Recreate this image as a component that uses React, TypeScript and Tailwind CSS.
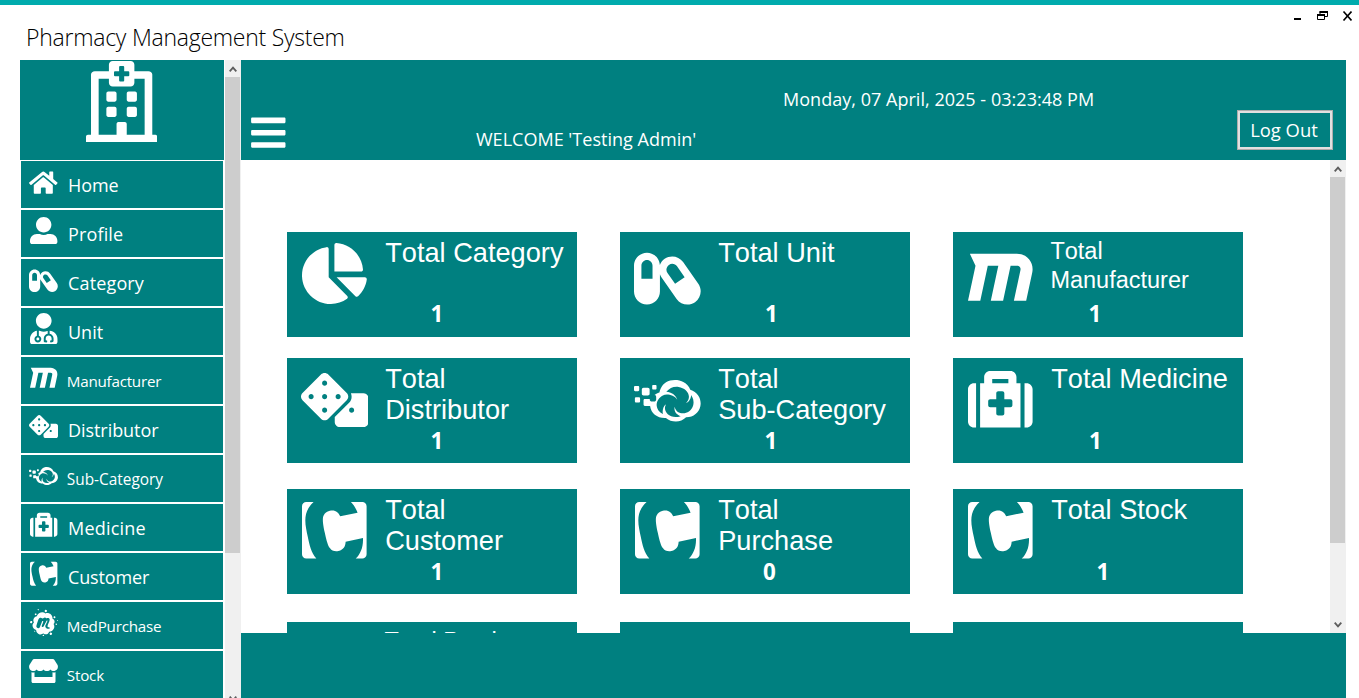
import type { IconType } from "react-icons";
import {
  FaBars,
  FaCapsules,
  FaChartPie,
  FaCloudversify,
  FaContao,
  FaDice,
  FaHome,
  FaMaxcdn,
  FaMedkit,
  FaMeetup,
  FaRegHospital,
  FaStore,
  FaUserAlt,
  FaUserMd,
} from "react-icons/fa";

type NavItem = { label: string; icon: IconType; iconClass: string; labelClass: string };

const navItems: NavItem[] = [
  { label: "Home", icon: FaHome, iconClass: "mt-[8.6px] mr-[1px] h-[25.4px] w-[28.6px]", labelClass: "text-[18px] tracking-[-0.1px]" },
  { label: "Profile", icon: FaUserAlt, iconClass: "mt-[7px] h-[27.4px] w-[27.4px]", labelClass: "text-[18px] tracking-[0.15px]" },
  { label: "Category", icon: FaCapsules, iconClass: "mt-[8.6px] mr-[1px] h-[25.6px] w-[28.8px]", labelClass: "text-[18px] tracking-[0.15px]" },
  { label: "Unit", icon: FaUserMd, iconClass: "mt-[5px] h-[31.4px] w-[27.5px]", labelClass: "text-[18px]" },
  { label: "Manufacturer", icon: FaMaxcdn, iconClass: "mt-[6.6px] h-[27.4px] w-[27.4px]", labelClass: "ml-[-1.2px] text-[15.2px] tracking-[-0.24px]" },
  { label: "Distributor", icon: FaDice, iconClass: "mt-[9px] mr-[1px] h-[23.3px] w-[29px]", labelClass: "text-[18px] tracking-[-0.06px]" },
  { label: "Sub-Category", icon: FaCloudversify, iconClass: "mt-[9px] mr-[1px] h-[24px] w-[29px]", labelClass: "ml-[-1.2px] mt-[1px] text-[15.4px]" },
  { label: "Medicine", icon: FaMedkit, iconClass: "mt-[7.4px] h-[27.4px] w-[27.4px]", labelClass: "text-[18px] tracking-[0.22px]" },
  { label: "Customer", icon: FaContao, iconClass: "mt-[6.6px] h-[27.4px] w-[27.4px]", labelClass: "text-[18px] tracking-[-0.15px]" },
  { label: "MedPurchase", icon: FaMeetup, iconClass: "mt-[6.7px] h-[27.4px] w-[27.4px]", labelClass: "ml-[-1.2px] text-[15.2px] tracking-[-0.22px]" },
  { label: "Stock", icon: FaStore, iconClass: "mt-[8.4px] mr-[1px] h-[24px] w-[29px]", labelClass: "ml-[-1.2px] text-[15.2px] tracking-[-0.2px]" },
];

type Card = {
  lines: string[];
  value?: string;
  icon?: IconType;
  iconClass?: string;
  compact?: boolean;
  valueClass?: string;
};

const rows: { className: string; cards: Card[] }[] = [
  {
    className: "mb-[21px]",
    cards: [
      { lines: ["Total Category"], value: "1", icon: FaChartPie, iconClass: "mt-[11px] mr-[0.8px] h-[61px] w-[64.8px]", valueClass: "pl-[143.5px]" },
      { lines: ["Total Unit"], value: "1", icon: FaCapsules, iconClass: "mt-[16.6px] h-[59.3px] w-[66.7px]", valueClass: "pl-[145px]" },
      {
        lines: ["Total", "Manufacturer"],
        value: "1",
        icon: FaMaxcdn,
        iconClass: "mt-[13.2px] h-[64.6px] w-[64.6px]",
        compact: true,
        valueClass: "pl-[135.5px]",
      },
    ],
  },
  {
    className: "mb-[26px]",
    cards: [
      { lines: ["Total", "Distributor"], value: "1", icon: FaDice, iconClass: "mt-[15px] h-[54px] w-[67.5px]", valueClass: "mt-[1px] pl-[143.5px]" },
      { lines: ["Total", "Sub-Category"], value: "1", icon: FaCloudversify, iconClass: "mt-[15px] h-[55.4px] w-[66.7px]", valueClass: "mt-[1px] pl-[144.5px]" },
      { lines: ["Total Medicine"], value: "1", icon: FaMedkit, iconClass: "mt-[9px] h-[64.6px] w-[64.6px]", valueClass: "mt-[1px] pl-[136px]" },
    ],
  },
  {
    className: "mb-[28px]",
    cards: [
      { lines: ["Total", "Customer"], value: "1", icon: FaContao, iconClass: "mt-[9.2px] h-[64.6px] w-[64.6px]", valueClass: "mt-[1px] pl-[143.5px]" },
      { lines: ["Total", "Purchase"], value: "0", icon: FaContao, iconClass: "mt-[9.2px] h-[64.6px] w-[64.6px]", valueClass: "mt-[1px] pl-[143px]" },
      { lines: ["Total Stock"], value: "1", icon: FaContao, iconClass: "mt-[9.2px] h-[64.6px] w-[64.6px]", valueClass: "mt-[1px] pl-[143.5px]" },
    ],
  },
  { className: "", cards: [{ lines: ["Total Purchase"], compact: true }, { lines: [] }, { lines: [] }] },
];

function Chevron({ down = false }: { down?: boolean }) {
  return (
    <svg viewBox="0 0 8 6" className={down ? "h-[6px] w-[8px] rotate-180" : "h-[6px] w-[8px]"}>
      <path d="M0.7 5.3 4 1.6 7.3 5.3" fill="none" stroke="#5c5c5c" strokeWidth="1.8" />
    </svg>
  );
}

function NavButton({ item }: { item: NavItem }) {
  const Icon = item.icon;
  return (
    <button className="flex h-[47px] w-[202px] shrink-0 items-start bg-[#008080] text-left text-white">
      <span className="flex w-[46px] shrink-0 justify-center">
        <Icon className={item.iconClass} />
      </span>
      <span className="ml-[1px] mt-[12px] flex leading-[24px]">
        <span className={item.labelClass}>{item.label}</span>
      </span>
    </button>
  );
}

function StatCard({ card }: { card: Card }) {
  const Icon = card.icon;
  return (
    <div className="flex h-[105px] w-[290px] shrink-0 flex-col bg-[#008080] font-['Liberation_Sans',Arial,sans-serif] text-white">
      <div className="flex h-[69px] shrink-0">
        <div className="flex w-[95px] shrink-0 justify-center">{Icon && <Icon className={card.iconClass} />}</div>
        <div
          className={
            card.compact
              ? "pl-[2.4px] pt-[5px] text-[23.5px] leading-[29px] [font-kerning:none]"
              : "pl-[3.2px] pt-[5px] text-[27.2px] leading-[31px] [font-kerning:none]"
          }
        >
          {card.lines.map((line) => (
            <div key={line} className="whitespace-nowrap">
              {line}
            </div>
          ))}
        </div>
      </div>
      <div className={`text-[22.4px] font-bold leading-[26px] font-['Open_Sans','Noto_Sans',sans-serif] ${card.valueClass ?? ""}`}>
        {card.value}
      </div>
    </div>
  );
}

export default function App() {
  return (
    <div className="flex h-[698px] w-[1359px] flex-col overflow-hidden border-t-[5px] border-[#00abad] bg-white font-['Open_Sans','Noto_Sans',sans-serif]">
      <div className="flex h-[55px] shrink-0 items-start justify-between pl-[26px] pr-[7px]">
        <h1 className="mt-[16px] text-[23px] font-light leading-[32px] tracking-[-0.25px] text-black">
          Pharmacy Management System
        </h1>
        <div className="mt-[6px] flex">
          <svg viewBox="0 0 58 10" className="h-[10px] w-[58px]" fill="none" stroke="#000">
            <path d="M0 8h7" strokeWidth="2" />
            <path d="M26 3.5V0.5h7.5v5H31" strokeWidth="1" />
            <path d="M25.5 1h8.5" strokeWidth="2" />
            <path d="M23.5 4.5h7v4h-7z" strokeWidth="1" />
            <path d="M23 4h8" strokeWidth="2" />
            <path d="M49.5 0.5 57.5 9.5M57.5 0.5 49.5 9.5" strokeWidth="1.6" />
          </svg>
        </div>
      </div>

      <div className="flex h-[638px] shrink-0 pl-[20px]">
        <aside className="flex w-[204px] shrink-0 flex-col overflow-hidden">
          <div className="flex h-[100px] shrink-0 justify-center bg-[#008080] pr-[1.6px]">
            <FaRegHospital className="mt-[0.5px] h-[81.5px] w-[71.3px] text-white" />
          </div>
          <nav className="flex flex-col gap-[2px] pl-[1px] pt-[1px]">
            {navItems.map((item) => (
              <NavButton key={item.label} item={item} />
            ))}
          </nav>
        </aside>

        <div className="flex w-[17px] shrink-0 flex-col overflow-hidden border-l border-white bg-[#f0f0f0]">
          <div className="flex h-[17px] w-[15px] shrink-0 items-center justify-center">
            <Chevron />
          </div>
          <div className="h-[476px] w-[15px] shrink-0 bg-[#cdcdcd]" />
          <div className="mt-[143px] flex w-[15px] shrink-0 justify-center">
            <Chevron down />
          </div>
        </div>

        <div className="flex w-[1105px] shrink-0 flex-col">
          <header className="flex h-[100px] shrink-0 items-start bg-[#008080] text-white">
            <FaBars className="ml-[10.4px] mt-[53.3px] h-[39.3px] w-[34.6px]" />
            <div className="ml-[190px] mt-[67px] w-[307px] whitespace-nowrap text-[18px] leading-[24px] tracking-[0.02px]">
              WELCOME 'Testing Admin'
            </div>
            <div className="mt-[27px] w-[454px] whitespace-nowrap text-[18px] leading-[24px] tracking-[0.03px]">
              Monday, 07 April, 2025 - 03:23:48 PM
            </div>
            <button className="mt-[50px] h-[40px] w-[96px] border border-[#adadad] text-[18.4px] leading-[24px]">
              <span className="flex h-full w-full items-center justify-center border-2 border-[#e1e1e1] pr-[2px]">Log Out</span>
            </button>
          </header>

          <main className="flex h-[473px] shrink-0 overflow-hidden">
            <div className="flex w-[1089px] shrink-0 flex-col pl-[46px] pt-[72px]">
              {rows.map((row, i) => (
                <div key={i} className={`flex shrink-0 gap-[43px] ${row.className}`}>
                  {row.cards.map((card, j) => (
                    <StatCard key={j} card={card} />
                  ))}
                </div>
              ))}
            </div>
            <div className="flex w-[16px] shrink-0 flex-col bg-[#f0f0f0]">
              <div className="flex h-[17px] w-[15px] shrink-0 items-center justify-center">
                <Chevron />
              </div>
              <div className="h-[366px] w-[15px] shrink-0 bg-[#cdcdcd]" />
              <div className="mt-auto flex h-[17px] w-[15px] shrink-0 items-center justify-center">
                <Chevron down />
              </div>
            </div>
          </main>

          <footer className="h-[65px] shrink-0 bg-[#008080]" />
        </div>
      </div>
    </div>
  );
}
